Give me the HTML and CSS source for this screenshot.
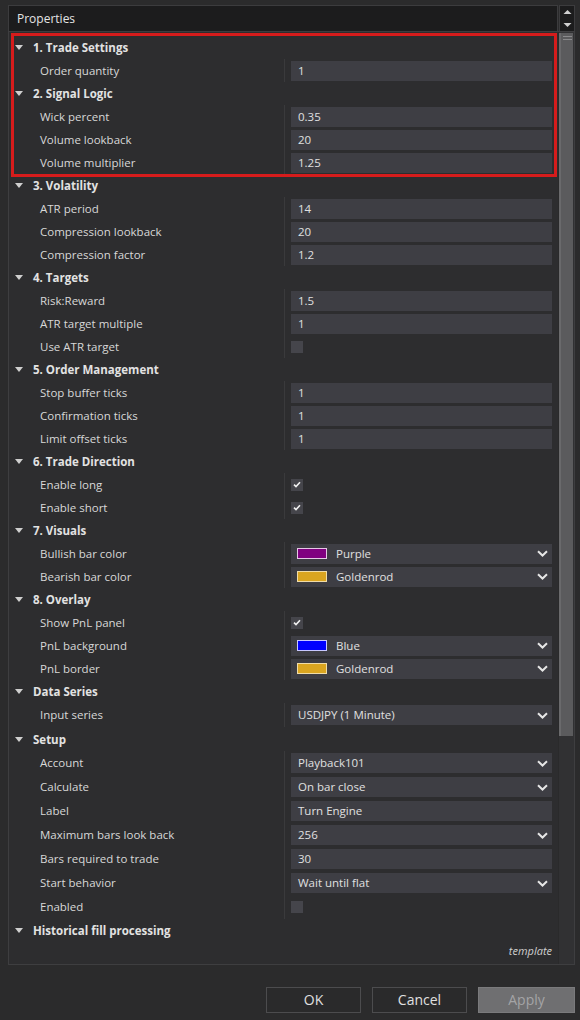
FILE: index.html
```html
<!DOCTYPE html>
<html>
<head>
<meta charset="utf-8">
<link rel="stylesheet" href="styles.css">
</head>
<body>
<div class="window">
  <div class="titlebar">
    <div class="title">Properties</div>
    <div class="spin">
      <svg width="9" height="6" viewBox="0 0 9 6"><path d="M0.5 5 L4.5 1 L8.5 5 Z" fill="#d0d0d0"/></svg>
      <svg width="9" height="6" viewBox="0 0 9 6"><path d="M0.5 1 L4.5 5 L8.5 1 Z" fill="#d0d0d0"/></svg>
    </div>
  </div>
  <div class="panel">
    <div class="grid">
      <div class="highlight">
        <div class="cat"><span class="tri"></span>1. Trade Settings</div>
        <div class="row"><div class="name">Order quantity</div><div class="val"><div class="box">1</div></div></div>
        <div class="cat"><span class="tri"></span>2. Signal Logic</div>
        <div class="row"><div class="name">Wick percent</div><div class="val"><div class="box">0.35</div></div></div>
        <div class="row"><div class="name">Volume lookback</div><div class="val"><div class="box">20</div></div></div>
        <div class="row"><div class="name">Volume multiplier</div><div class="val"><div class="box">1.25</div></div></div>
      </div>
      <div class="cat"><span class="tri"></span>3. Volatility</div>
      <div class="row"><div class="name">ATR period</div><div class="val"><div class="box">14</div></div></div>
      <div class="row"><div class="name">Compression lookback</div><div class="val"><div class="box">20</div></div></div>
      <div class="row"><div class="name">Compression factor</div><div class="val"><div class="box">1.2</div></div></div>
      <div class="cat"><span class="tri"></span>4. Targets</div>
      <div class="row"><div class="name">Risk:Reward</div><div class="val"><div class="box">1.5</div></div></div>
      <div class="row"><div class="name">ATR target multiple</div><div class="val"><div class="box">1</div></div></div>
      <div class="row"><div class="name">Use ATR target</div><div class="val"><span class="check"></span></div></div>
      <div class="cat"><span class="tri"></span>5. Order Management</div>
      <div class="row"><div class="name">Stop buffer ticks</div><div class="val"><div class="box">1</div></div></div>
      <div class="row"><div class="name">Confirmation ticks</div><div class="val"><div class="box">1</div></div></div>
      <div class="row"><div class="name">Limit offset ticks</div><div class="val"><div class="box">1</div></div></div>
      <div class="cat"><span class="tri"></span>6. Trade Direction</div>
      <div class="row"><div class="name">Enable long</div><div class="val"><span class="check"><svg width="8" height="7" viewBox="0 0 8 7"><path d="M1 3.6 L3 5.6 L7 1.2" stroke="#f0f0f0" stroke-width="1.6" fill="none"/></svg></span></div></div>
      <div class="row"><div class="name">Enable short</div><div class="val"><span class="check"><svg width="8" height="7" viewBox="0 0 8 7"><path d="M1 3.6 L3 5.6 L7 1.2" stroke="#f0f0f0" stroke-width="1.6" fill="none"/></svg></span></div></div>
      <div class="cat"><span class="tri"></span>7. Visuals</div>
      <div class="row"><div class="name">Bullish bar color</div><div class="val"><div class="box drop"><span class="swatch purple"></span><span class="txt">Purple</span><svg class="chev" width="11" height="7" viewBox="0 0 11 7"><path d="M1 1.2 L5.5 5.5 L10 1.2" stroke="#e6e6e6" stroke-width="2" fill="none"/></svg></div></div></div>
      <div class="row"><div class="name">Bearish bar color</div><div class="val"><div class="box drop"><span class="swatch gold"></span><span class="txt">Goldenrod</span><svg class="chev" width="11" height="7" viewBox="0 0 11 7"><path d="M1 1.2 L5.5 5.5 L10 1.2" stroke="#e6e6e6" stroke-width="2" fill="none"/></svg></div></div></div>
      <div class="cat"><span class="tri"></span>8. Overlay</div>
      <div class="row"><div class="name">Show PnL panel</div><div class="val"><span class="check"><svg width="8" height="7" viewBox="0 0 8 7"><path d="M1 3.6 L3 5.6 L7 1.2" stroke="#f0f0f0" stroke-width="1.6" fill="none"/></svg></span></div></div>
      <div class="row"><div class="name">PnL background</div><div class="val"><div class="box drop"><span class="swatch blue"></span><span class="txt">Blue</span><svg class="chev" width="11" height="7" viewBox="0 0 11 7"><path d="M1 1.2 L5.5 5.5 L10 1.2" stroke="#e6e6e6" stroke-width="2" fill="none"/></svg></div></div></div>
      <div class="row"><div class="name">PnL border</div><div class="val"><div class="box drop"><span class="swatch gold"></span><span class="txt">Goldenrod</span><svg class="chev" width="11" height="7" viewBox="0 0 11 7"><path d="M1 1.2 L5.5 5.5 L10 1.2" stroke="#e6e6e6" stroke-width="2" fill="none"/></svg></div></div></div>
      <div class="cat"><span class="tri"></span>Data Series</div>
      <div class="row tall"><div class="name">Input series</div><div class="val"><div class="box drop"><span class="txt">USDJPY (1 Minute)</span><svg class="chev" width="11" height="7" viewBox="0 0 11 7"><path d="M1 1.2 L5.5 5.5 L10 1.2" stroke="#e6e6e6" stroke-width="2" fill="none"/></svg></div></div></div>
      <div class="cat tall"><span class="tri"></span>Setup</div>
      <div class="row tall"><div class="name">Account</div><div class="val"><div class="box drop"><span class="txt">Playback101</span><svg class="chev" width="11" height="7" viewBox="0 0 11 7"><path d="M1 1.2 L5.5 5.5 L10 1.2" stroke="#e6e6e6" stroke-width="2" fill="none"/></svg></div></div></div>
      <div class="row tall"><div class="name">Calculate</div><div class="val"><div class="box drop"><span class="txt">On bar close</span><svg class="chev" width="11" height="7" viewBox="0 0 11 7"><path d="M1 1.2 L5.5 5.5 L10 1.2" stroke="#e6e6e6" stroke-width="2" fill="none"/></svg></div></div></div>
      <div class="row tall"><div class="name">Label</div><div class="val"><div class="box">Turn Engine</div></div></div>
      <div class="row tall"><div class="name">Maximum bars look back</div><div class="val"><div class="box drop"><span class="txt">256</span><svg class="chev" width="11" height="7" viewBox="0 0 11 7"><path d="M1 1.2 L5.5 5.5 L10 1.2" stroke="#e6e6e6" stroke-width="2" fill="none"/></svg></div></div></div>
      <div class="row tall"><div class="name">Bars required to trade</div><div class="val"><div class="box">30</div></div></div>
      <div class="row tall"><div class="name">Start behavior</div><div class="val"><div class="box drop"><span class="txt">Wait until flat</span><svg class="chev" width="11" height="7" viewBox="0 0 11 7"><path d="M1 1.2 L5.5 5.5 L10 1.2" stroke="#e6e6e6" stroke-width="2" fill="none"/></svg></div></div></div>
      <div class="row tall"><div class="name">Enabled</div><div class="val"><span class="check"></span></div></div>
      <div class="cat"><span class="tri"></span>Historical fill processing</div>
      <div class="template">template</div>
    </div>
    <div class="scrollbar">
      <div class="thumb"><span class="grip"></span><span class="grip"></span></div>
    </div>
  </div>
  <div class="buttons">
    <div class="btn ok">OK</div>
    <div class="btn cancel">Cancel</div>
    <div class="btn apply">Apply</div>
  </div>
</div>
</body>
</html>
```

FILE: styles.css
```css
html, body {
  margin: 0;
  padding: 0;
  background: #2b2b2c;
  font-family: "Open Sans", "Noto Sans", sans-serif;
  font-size: 11.5px;
  color: #dcdcdc;
}

.window {
  width: 567px;
  margin-left: 8px;
  padding-top: 5px;
}

.titlebar {
  display: flex;
  height: 26px;
  gap: 1px;
}

.title {
  flex: 1;
  box-sizing: border-box;
  background: #1c1c1d;
  border: 1px solid #3c3c3e;
  border-bottom: none;
  padding-left: 8px;
  line-height: 25px;
  font-size: 12px;
  color: #e4e4e4;
}

.spin {
  width: 16px;
  box-sizing: border-box;
  background: #1c1c1d;
  border: 1px solid #3c3c3e;
  border-bottom: none;
  display: flex;
  flex-direction: column;
  align-items: center;
  justify-content: center;
  gap: 7px;
}

.spin svg { display: block; }

.panel {
  display: flex;
  height: 934px;
  box-sizing: border-box;
  border: 1px solid #3e3e40;
}

.grid {
  flex: 1;
  display: flex;
  flex-direction: column;
  padding-top: 4px;
  background: #2d2d2f;
}

.highlight {
  position: relative;
}

.highlight::after {
  content: "";
  position: absolute;
  left: 2px;
  right: 1px;
  top: -3px;
  bottom: -3px;
  border: 3px solid #d61c1c;
  pointer-events: none;
}

.cat {
  height: 23px;
  display: flex;
  align-items: center;
  padding-left: 6px;
  font-weight: 700;
  color: #e2e2e2;
}

.cat.tall { height: 24px; }

.tri {
  width: 0;
  height: 0;
  border-left: 4.5px solid transparent;
  border-right: 4.5px solid transparent;
  border-top: 5px solid #cfcfcf;
  margin-right: 10px;
}

.row {
  height: 23px;
  display: flex;
}

.row.tall { height: 24px; }

.name {
  width: 244px;
  padding-left: 31px;
  line-height: 23px;
  color: #d8d8d8;
}

.row.tall .name { line-height: 24px; }

.val {
  flex: 1;
  border-left: 1px solid #3a3a3c;
  padding: 0 6px 0 6px;
  display: flex;
  align-items: center;
}

.box {
  flex: 1;
  height: 20px;
  box-sizing: border-box;
  background: #3e3e44;
  padding-left: 7px;
  line-height: 20px;
  color: #e0e0e0;
}

.drop {
  display: flex;
  align-items: center;
}

.drop .txt { flex: 1; }

.chev {
  display: block;
  margin-right: 4px;
}

.swatch {
  width: 28px;
  height: 9px;
  border: 1px solid #e8e8e8;
  margin-left: -1px;
  margin-right: 9px;
}

.swatch.purple { background: #800080; border-color: #e6c8e6; }
.swatch.gold { background: #daa520; border-color: #f0dca8; }
.swatch.blue { background: #0000ff; border-color: #c8c8ff; }

.check {
  width: 12px;
  height: 12px;
  background: #45454b;
  display: flex;
  align-items: center;
  justify-content: center;
}

.check svg { display: block; }

.template {
  margin-top: auto;
  margin-bottom: 6px;
  padding-right: 6px;
  text-align: right;
  font-style: italic;
  font-size: 11px;
  color: #d0d0d0;
}

.scrollbar {
  width: 15px;
  background: #313133;
  border-left: 1px solid #2a2a2b;
  padding-top: 1px;
}

.thumb {
  height: 703px;
  margin-right: 1px;
  background: #5b5b5d;
  border-left: 2px solid #6a6a6c;
  display: flex;
  flex-direction: column;
  align-items: center;
  padding-top: 3px;
  gap: 2px;
  box-sizing: border-box;
}

.grip {
  width: 9px;
  height: 1px;
  background: #8a8a8c;
}

.buttons {
  display: flex;
  justify-content: flex-end;
  gap: 11px;
  margin-top: 22px;
}

.btn {
  width: 95px;
  height: 26px;
  box-sizing: border-box;
  border: 1px solid #4c4c4e;
  background: #2a2a2b;
  text-align: center;
  line-height: 24px;
  font-size: 14px;
  color: #e0e0e0;
}

.btn.apply {
  width: 97px;
  background: #6f6f71;
  border-color: #7a7a7c;
  color: #a4a4a6;
}
```
